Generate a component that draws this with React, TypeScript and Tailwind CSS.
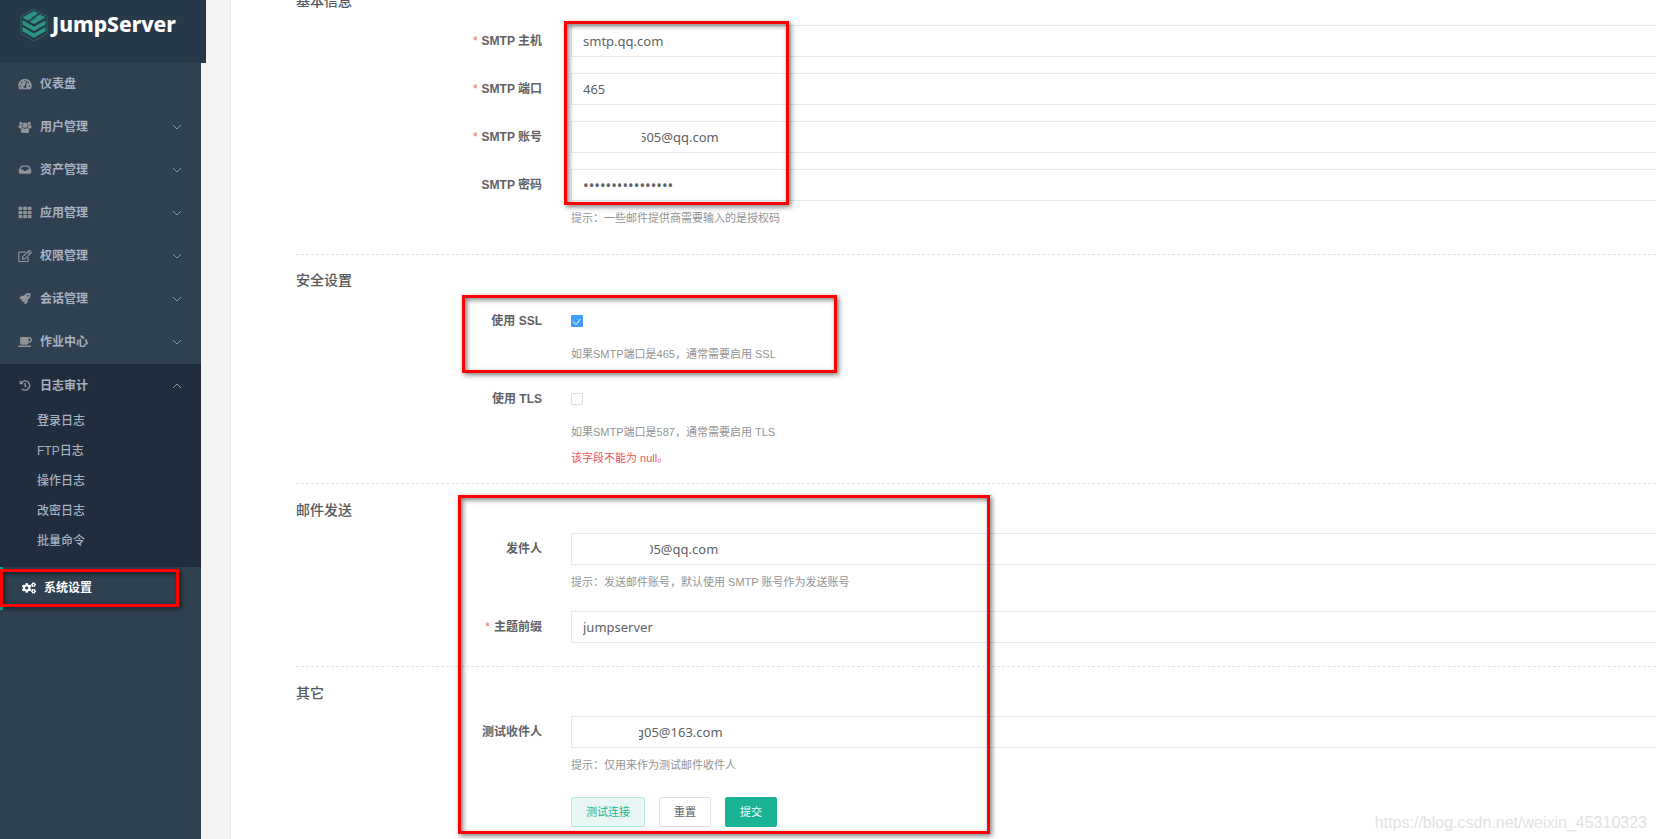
import { useState } from 'react';
import type { ReactNode } from 'react';
import { FaCoffee, FaCogs, FaHistory, FaInbox, FaRegEdit, FaRocket, FaTachometerAlt, FaTh } from 'react-icons/fa';

const UsersIcon = ({ className, size }: { className?: string; size: number }) => (
  <svg viewBox="0 0 14 13" height={size} className={className} fill="currentColor">
    <circle cx="2.500" cy="2.500" r="1.800" />
    <circle cx="11.500" cy="2.500" r="1.800" />
    <circle cx="7" cy="4.500" r="2.800" />
    <path d="M0 6.500c0-1.500.3-2.300 1-2.300.5.4 1.500.7 2.600.4-.1 1 .2 2 .8 2.700C3.500 7.300 3 7.500 2.600 8H1.200C.5 8 0 7.500 0 6.500zM14 6.500c0-1.500-.3-2.300-1-2.300-.5.4-1.500.7-2.600.4.100 1-.2 2-.8 2.700.9 0 1.400.2 1.800.7h1.400c.7 0 1.200-.5 1.200-1.500z" />
    <path d="M2.500 11c0-2 .7-3.300 2-3.300 1.500 1.100 3.500 1.100 5 0 1.300 0 2 1.300 2 3.300 0 1.300-.8 2-2 2h-5c-1.200 0-2-.7-2-2z" />
  </svg>
);

const menu = [
  { label: '仪表盘', icon: FaTachometerAlt, size: 12, leaf: true },
  { label: '用户管理', icon: UsersIcon, size: 12 },
  { label: '资产管理', icon: FaInbox, size: 11 },
  { label: '应用管理', icon: FaTh, size: 13 },
  { label: '权限管理', icon: FaRegEdit, size: 12 },
  { label: '会话管理', icon: FaRocket, size: 11 },
  { label: '作业中心', icon: FaCoffee, size: 12 },
];

const auditLinks = ['登录日志', 'FTP日志', '操作日志', '改密日志', '批量命令'];

const Arrow = ({ up = false }) => (
  <svg viewBox="0 0 10 10" className="w-[10px] h-[10px]" fill="none" stroke="#8c98a7">
    <path d={up ? 'M1 7l4-4 4 4' : 'M1 3l4 4 4-4'} />
  </svg>
);

function Logo() {
  return (
    <div className="relative z-10 w-[206px] h-[63px] bg-[#273849] flex items-start pl-5 pt-2">
      <svg viewBox="0 0 28 34" className="w-7 h-[34px]" fill="#2b957f">
        <path d="M14 1l13 7.500v17L14 33 1 25.500v-17z" fill="none" stroke="#27665f" strokeWidth="1" />
        <path d="M14 3l4.500 2.600-7.300 4.200 1.300.8 7.500-4.200 5.500 3.200L14 16l-4.500-2.600 7.300-4.200-1.300-.8L8 12.600 2.500 9.600z" />
        <path d="M2.500 12.200L14 18.700l11.500-6.500v4.300L14 23 2.500 16.500z" />
        <path d="M2.500 19L14 25.500 25.500 19v4.200L14 29.700 2.500 23.200z" />
      </svg>
      <span className="ml-1 text-[21px] leading-8 font-extrabold text-white font-['Noto_Sans']">JumpServer</span>
    </div>
  );
}

// red frame drawn over the form
const Mark = ({ className }: { className: string }) => (
  <div
    className={`absolute z-20 pointer-events-none border-3 border-[#ff0000] shadow-[2px_2px_5px_rgba(0,0,0,0.5),inset_2px_2px_5px_rgba(0,0,0,0.5)] ${className}`}
  />
);

type RowProps = { id: string; label: string; required?: boolean; help?: string; error?: string; children: ReactNode };

function Row({ id, label, required, help, error, children }: RowProps) {
  return (
    <div className="flex">
      <label htmlFor={id} className="w-[246px] mr-[29px] shrink-0 text-right text-xs leading-8 font-bold text-[#606266]">
        {required && <span className="mr-1 font-normal text-[#f56c6c]">*</span>}
        {label}
      </label>
      <div className="flex-1 text-[11px]">
        <div className="relative h-8 flex items-center">{children}</div>
        {help && <p className="mt-1 leading-[26px] text-[#949494]">{help}</p>}
        {error && <p className="leading-[26px] text-[#ed5565]">{error}</p>}
      </div>
    </div>
  );
}

const inputClass =
  "w-full h-8 border border-r-0 border-[#e5e6e7] bg-white text-[#606266] outline-none font-['Noto_Sans']";
const titleClass = 'text-sm leading-6 font-medium text-[#56585c]';

export default function App() {
  const [ssl, setSsl] = useState(true);
  const [tls, setTls] = useState(false);

  return (
    <div className="relative flex h-screen overflow-hidden bg-[#f3f3f4] font-['Liberation_Sans','Noto_Sans_CJK_SC',sans-serif]">
      <aside className="w-[201px] shrink-0 bg-[#2f4050] text-xs font-bold text-[#a7b1c2]">
        <Logo />
        <nav>
          {menu.map(({ label, icon: Icon, size, leaf }) => (
            <a key={label} href="#" className="flex items-center h-[43px] pl-[18px] pr-[19px] pb-[2px]">
              <Icon className="w-[14px] text-[#8f949b]" size={size} />
              <span className="ml-2 flex-1">{label}</span>
              {!leaf && <Arrow />}
            </a>
          ))}
          <div className="bg-[#1f2d3d] pb-[10px]">
            <a href="#" className="flex items-center h-[43px] pl-[18px] pr-[19px]">
              <FaHistory className="w-[14px] text-[#8f949b]" size={11} />
              <span className="ml-2 flex-1">日志审计</span>
              <Arrow up />
            </a>
            {auditLinks.map((label) => (
              <a key={label} href="#" className="flex items-center h-[30px] pl-[37px] pb-[2px] font-medium">
                {label}
              </a>
            ))}
          </div>
          <a href="#" className="relative flex items-center h-[43px] pl-[19px] pb-[2px] border-l-3 border-[#19aa8d] text-white">
            <FaCogs size={14} />
            <span className="ml-2">系统设置</span>
            <Mark className="-left-[3px] top-[2px] w-[179px] h-[38px]" />
          </a>
        </nav>
      </aside>

      <main className="ml-[29px] flex-1 bg-white border-l border-[#e7eaec] pl-[65px]">
        <section className="relative -mt-[11px] pb-[23px] border-b border-dashed border-[#e0e3e6]">
          <h3 className={titleClass}>基本信息</h3>
          <div className="mt-3 flex flex-col gap-4">
            <Row id="host" label="SMTP 主机" required>
              <input id="host" className={`${inputClass} pl-[11px] text-[13px]`} defaultValue="smtp.qq.com" />
            </Row>
            <Row id="port" label="SMTP 端口" required>
              <input id="port" className={`${inputClass} pl-[11px] text-[13px]`} defaultValue="465" />
            </Row>
            <Row id="account" label="SMTP 账号" required>
              <input id="account" className={`${inputClass} pl-[67px] text-[13px]`} defaultValue="505@qq.com" />
              <span className="absolute left-[60px] top-2 w-[11px] h-4 bg-white" />
            </Row>
            <Row id="password" label="SMTP 密码" help="提示：一些邮件提供商需要输入的是授权码">
              <input
                id="password"
                type="password"
                className={`${inputClass} pl-[11px] text-[15px]`}
                defaultValue="abcdefghijklmnop"
              />
            </Row>
          </div>
          <Mark className="left-[268px] top-[32px] w-[225px] h-[184px]" />
        </section>

        <section className="relative pt-[13px] pb-3 border-b border-dashed border-[#e0e3e6]">
          <h3 className={titleClass}>安全设置</h3>
          <div className="mt-[13px] flex flex-col gap-4">
            <Row id="ssl" label="使用 SSL" help="如果SMTP端口是465，通常需要启用 SSL">
              <input
                id="ssl"
                type="checkbox"
                checked={ssl}
                onChange={(e) => setSsl(e.target.checked)}
                className="peer appearance-none w-3 h-3 rounded-[1px] border border-[#dcdfe6] checked:bg-[#409eff] checked:border-[#409eff]"
              />
              <svg
                viewBox="0 0 12 12"
                className="absolute left-0 w-3 h-3 hidden peer-checked:block pointer-events-none"
                fill="none"
                stroke="#fff"
              >
                <path d="M2 6.500l3 3L9.500 4" />
              </svg>
            </Row>
            <Row id="tls" label="使用 TLS" help="如果SMTP端口是587，通常需要启用 TLS" error="该字段不能为 null。">
              <input
                id="tls"
                type="checkbox"
                checked={tls}
                onChange={(e) => setTls(e.target.checked)}
                className="appearance-none w-3 h-3 rounded-[1px] border border-[#dcdfe6] checked:bg-[#409eff] checked:border-[#409eff]"
              />
            </Row>
          </div>
          <Mark className="left-[166px] top-[40px] w-[375px] h-[78px]" />
        </section>

        <div className="relative">
          <section className="pt-[14px] pb-[23px] border-b border-dashed border-[#e0e3e6]">
            <h3 className={titleClass}>邮件发送</h3>
            <div className="mt-[11px] flex flex-col gap-4">
              <Row id="from" label="发件人" help="提示：发送邮件账号，默认使用 SMTP 账号作为发送账号">
                <input id="from" className={`${inputClass} pl-[74px] text-[13px]`} defaultValue="05@qq.com" />
                <span className="absolute left-[70px] top-2 w-[9px] h-4 bg-white" />
              </Row>
              <Row id="prefix" label="主题前缀" required>
                <input id="prefix" className={`${inputClass} pl-[11px] text-[13px]`} defaultValue="jumpserver" />
              </Row>
            </div>
          </section>
          <section className="pt-[14px]">
            <h3 className={titleClass}>其它</h3>
            <div className="mt-[11px]">
              <Row id="to" label="测试收件人" help="提示：仅用来作为测试邮件收件人">
                <input id="to" className={`${inputClass} pl-[64px] text-[13px]`} defaultValue="g05@163.com" />
                <span className="absolute left-[60px] top-2 w-[8px] h-4 bg-white" />
              </Row>
            </div>
            <div className="mt-[19px] ml-[275px] flex gap-[14px] text-[11px]">
              <button className="h-[30px] px-[14px] rounded-xs border border-[#b8e6dc] bg-[#e8f7f4] text-[#1ab394]">测试连接</button>
              <button className="h-[30px] px-[14px] rounded-xs border border-[#dcdfe6] bg-white text-[#606266]">重置</button>
              <button className="h-[30px] px-[14px] rounded-xs border border-[#1ab394] bg-[#1ab394] text-white">提交</button>
            </div>
          </section>
          <Mark className="left-[162px] top-[11px] w-[532px] h-[339px]" />
        </div>
      </main>
      <span className="absolute right-[9px] bottom-1 text-base text-[#e2e2e2]">https://blog.csdn.net/weixin_45310323</span>
    </div>
  );
}
